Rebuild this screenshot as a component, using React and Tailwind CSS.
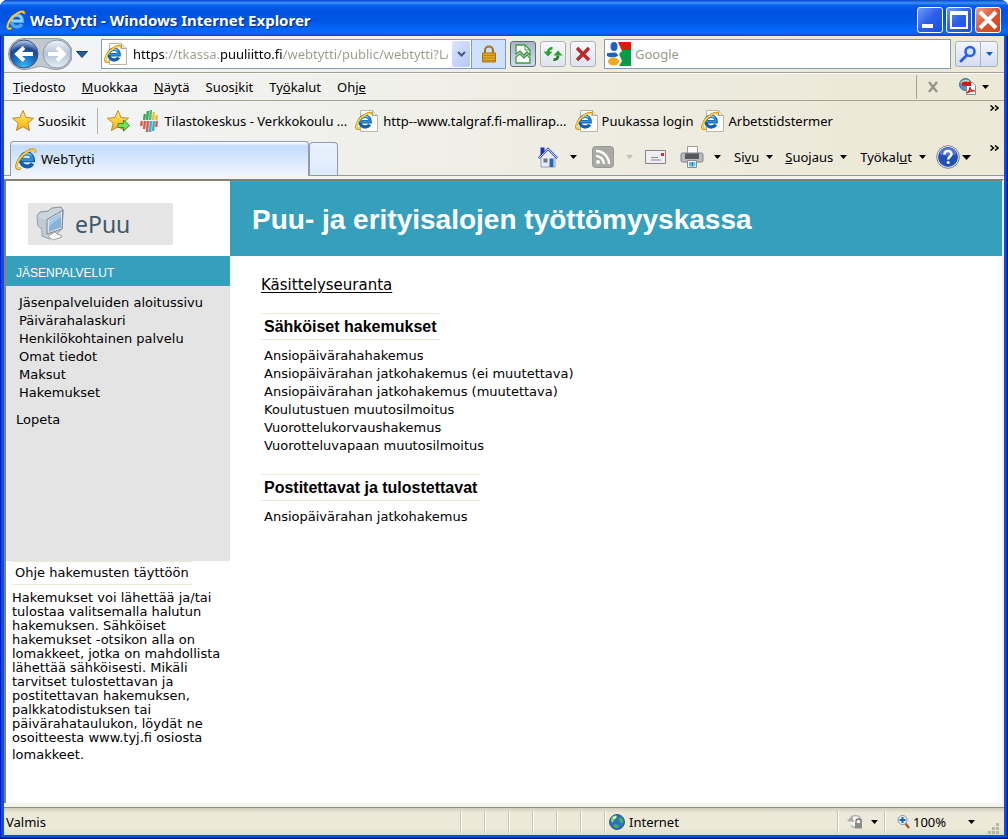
import React, { useState } from 'react';

const MENUS = [
  ['', 'T', 'iedosto'],
  ['', 'M', 'uokkaa'],
  ['', 'N', 'äytä'],
  ['Suos', 'i', 'kit'],
  ['Ty', 'ö', 'kalut'],
  ['Ohj', 'e', ''],
];

const MEMBER_LINKS = [
  'Jäsenpalveluiden aloitussivu',
  'Päivärahalaskuri',
  'Henkilökohtainen palvelu',
  'Omat tiedot',
  'Maksut',
  'Hakemukset',
];

const ELECTRONIC = [
  'Ansiopäivärahahakemus',
  'Ansiopäivärahan jatkohakemus (ei muutettava)',
  'Ansiopäivärahan jatkohakemus (muutettava)',
  'Koulutustuen muutosilmoitus',
  'Vuorottelukorvaushakemus',
  'Vuorotteluvapaan muutosilmoitus',
];

const HELP_LINES = [
  'Hakemukset voi lähettää ja/tai',
  'tulostaa valitsemalla halutun',
  'hakemuksen. Sähköiset',
  'hakemukset -otsikon alla on',
  'lomakkeet, jotka on mahdollista',
  'lähettää sähköisesti. Mikäli',
  'tarvitset tulostettavan ja',
  'postitettavan hakemuksen,',
  'palkkatodistuksen tai',
  'päivärahataulukon, löydät ne',
  'osoitteesta www.tyj.fi osiosta',
];

/* ---------- icons ---------- */

function IeMark({ light }) {
  return (
    <g fill="none">
      <path d="M6.5 12.200H18C18 8 15.500 5.600 12 5.600S5.800 8.300 5.800 12s2.700 6.400 6.200 6.400c2.400 0 4.300-1 5.400-2.900" stroke={light ? '#4da6ee' : '#135fae'} strokeWidth="4" />
      <path d="M6.5 12H17.500C17.500 8 15 6 12 6S6.200 8.500 6.200 12" stroke={light ? '#9ad8fb' : '#2f93dc'} strokeWidth="2" />
      <path d="M7.500 7.500c2-2.500 6-2.800 8.500-.5" stroke="#7fd0f5" strokeWidth="1.500" />
      <path d="M6 20C3.500 21.500 1 21 1.500 17.500 2.200 13 6.500 7 12.500 3.500 17 .800 20.500 1 20.200 4.500" stroke="#c08a14" strokeWidth="2.600" />
      <path d="M6 19.800C3.500 21 1.500 20.500 1.800 17.500 2.500 13 6.700 7.200 12.700 3.700 17 1.200 20 1.500 20 4" stroke="#ffd84a" strokeWidth="1.500" />
    </g>
  );
}

function IeIcon({ className, light }) {
  return (
    <svg viewBox="0 0 22 22" className={className} aria-hidden="true">
      <IeMark light={light} />
    </svg>
  );
}

function IePageIcon() {
  return (
    <svg viewBox="0 0 24 24" className="h-6 w-6 shrink-0" aria-hidden="true">
      <path d="M5.500 1.500h12l5 5v16h-17z" fill="#fdfdfc" stroke="#b9b7ad" />
      <path d="M17.500 1.500v5h5" fill="#e4e4e0" stroke="#aaa89e" />
      <g transform="translate(0 2.500) scale(.84)">
        <IeMark />
      </g>
    </svg>
  );
}

const STAR = 'M12 1.500l3 7 7.500.700-5.700 5 1.800 7.400L12 17.700l-6.600 3.900 1.800-7.400-5.700-5 7.500-.7z';

function StarIcon({ add }) {
  return (
    <svg viewBox="0 0 24 24" className="h-6 w-6 shrink-0" aria-hidden="true">
      <defs>
        <linearGradient id="star" x1="0" y1="0" x2="0" y2="1">
          <stop offset="0" stopColor="#fff0a0" />
          <stop offset=".5" stopColor="#ffd02f" />
          <stop offset="1" stopColor="#f5a623" />
        </linearGradient>
      </defs>
      <path d={STAR} fill="url(#star)" stroke="#bd8a2b" strokeLinejoin="round" />
      {add && <path d="M12 14.500h5.500V11l6 5.500-6 5.500v-3.500H12z" fill="#7ddc5a" stroke="#2f9427" />}
    </svg>
  );
}

// bars lean to the right like the statistics office logo
function StatIcon() {
  const bars = [
    [0, 12, 17, '#e2574c'], [3, 5, 11, '#35a85a'], [3, 12, 20, '#e2574c'],
    [6, 2, 11, '#35a85a'], [6, 12, 23, '#e2574c'], [9, 1, 11, '#4cb96a'],
    [9, 12, 23, '#35b0c6'], [12, 3, 11, '#f4b83a'], [12, 12, 22, '#35b0c6'],
    [15, 6, 11, '#f4b83a'], [15, 12, 18, '#e2574c'],
  ];
  return (
    <svg viewBox="0 0 18 24" className="h-6 w-[18px] shrink-0" aria-hidden="true">
      {bars.map(([x, y1, y2, c]) => (
        <path key={`${x}-${y1}`} d={`M${x + 1.9} ${y1}L${x + 1.1} ${y2}`} stroke={c} strokeWidth="2.400" />
      ))}
    </svg>
  );
}

function NavButtons() {
  return (
    <div className="relative h-8 w-16 shrink-0">
      <svg viewBox="0 0 64 32" className="absolute inset-0 h-8 w-16" aria-hidden="true">
        <defs>
          <radialGradient id="back" cx=".5" cy="1" r=".95">
            <stop offset="0" stopColor="#3fc0fb" />
            <stop offset=".5" stopColor="#1768bd" />
            <stop offset=".75" stopColor="#1c4790" />
            <stop offset="1" stopColor="#a5bfe4" />
          </radialGradient>
          <linearGradient id="fwd" x1="0" y1="0" x2="0" y2="1">
            <stop offset="0" stopColor="#eef2f7" />
            <stop offset=".5" stopColor="#b5c4d5" />
            <stop offset="1" stopColor="#e4f0f8" />
          </linearGradient>
        </defs>
        <path d="M16 .5h33a15.500 15.500 0 0 1 0 31c-8 0-11-3-16.500-3S24 31.500 16 31.500a15.500 15.500 0 0 1 0-31z" fill="#c3c8ce" stroke="#9a9da2" />
        <circle cx="16" cy="16" r="14" fill="url(#back)" stroke="#3a557f" />
        <circle cx="49" cy="16" r="14" fill="url(#fwd)" stroke="#8d99a8" />
        <path d="M25 16H10m6-6.500L9 16l7 6.500" fill="none" stroke="#fff" strokeWidth="3.800" />
        <path d="M40 16h15m-6-6.500l7 6.500-7 6.500" fill="none" stroke="#fff" strokeWidth="3.800" />
      </svg>
      <div className="relative flex h-8">
        <button aria-label="Takaisin" className="flex-1 rounded-full" />
        <button aria-label="Eteenpäin" className="flex-1 rounded-full" />
      </div>
    </div>
  );
}

function Caret({ className = 'text-black' }) {
  return (
    <svg viewBox="0 0 7 4" className={`h-1 w-[7px] shrink-0 ${className}`} aria-hidden="true">
      <path d="M0 0h7L3.500 4z" fill="currentColor" />
    </svg>
  );
}

function LockIcon() {
  return (
    <svg viewBox="0 0 16 18" className="h-[18px] w-4" aria-hidden="true">
      <path d="M4 9V5.500a4 4 0 0 1 8 0V9" fill="none" stroke="#a07818" strokeWidth="2.200" />
      <path d="M1.500 8h13v9h-13z" fill="#dfa827" stroke="#a8740f" />
      <path d="M2 10.500h12M2 13h12M2 15.500h12" stroke="#b98516" />
    </svg>
  );
}

function BrokenPageIcon() {
  return (
    <svg viewBox="0 0 18 22" className="h-[22px] w-[18px]" aria-hidden="true">
      <path d="M2 9V2h9l5 5v5l-3-3-3 3-4-4-4 3z" fill="#fff" stroke="#3f9a3f" strokeWidth="1.300" />
      <path d="M2 14l4-3 4 4 3-3 3 3v5H2z" fill="#fff" stroke="#3f9a3f" strokeWidth="1.300" />
      <path d="M11 2v5h5" fill="none" stroke="#3f9a3f" />
    </svg>
  );
}

function RefreshIcon() {
  return (
    <svg viewBox="0 0 20 18" className="h-[18px] w-5" aria-hidden="true">
      <path d="M9.500 3.500C7 3 5.500 4.500 5.200 7" fill="none" stroke="#2f9e35" strokeWidth="2.600" />
      <path d="M.5 6.500h9L5 11.500z" fill="#2f9e35" />
      <path d="M10.500 14.500c3 .5 4.300-1 4.600-4" fill="none" stroke="#1c7d24" strokeWidth="2.800" />
      <path d="M10.500 10.500h9L15 5.500z" fill="#2f9e35" />
    </svg>
  );
}

function GoogleIcon() {
  return (
    <svg viewBox="0 0 24 24" className="h-6 w-6 shrink-0" aria-hidden="true">
      <path d="M11 0h13v8l-9 1z" fill="#f01010" />
      <path d="M24 8v16H12l3-5-3-7 4-4z" fill="#0b9a45" />
      <ellipse cx="7" cy="4.500" rx="3.500" ry="4.500" fill="#1c62c4" />
      <path d="M0 9c2 2 4 2 7 1.500 2-.3 4 1 4 3.500-3 1.500-8 2-11 0z" fill="#1c62c4" />
      <path d="M0 9h3v2H0z" fill="#fff" />
      <ellipse cx="6.500" cy="19.500" rx="5.500" ry="4" fill="#f7a81a" />
    </svg>
  );
}

function SearchIcon() {
  return (
    <svg viewBox="0 0 18 18" className="h-[18px] w-[18px]" aria-hidden="true">
      <circle cx="11" cy="6.500" r="4.500" fill="#d7e7ff" stroke="#2863e2" strokeWidth="2.600" />
      <path d="M7.500 10.500L2 16" stroke="#2863e2" strokeWidth="3" strokeLinecap="round" />
    </svg>
  );
}

function PdfIcon() {
  return (
    <svg viewBox="0 0 18 18" className="h-[18px] w-[18px]" aria-hidden="true">
      <circle cx="6.500" cy="6.500" r="6" fill="#5b93b8" stroke="#49708a" />
      <path d="M2 5c2-3 5-3 8-2" fill="none" stroke="#b9dcc0" strokeWidth="1.500" />
      <path d="M7.500 4.500h6l3 3v9h-9z" fill="#fff" stroke="#8b8b8b" />
      <path d="M3 4h9v4H3z" fill="#d81717" />
      <path d="M8 15c3-2 3-4 3-6 0 3 2 4 5 4-3-.5-5 0-8 2z" fill="none" stroke="#d81717" strokeWidth="1.200" />
    </svg>
  );
}

function HomeIcon() {
  return (
    <svg viewBox="0 0 20 21" className="h-[21px] w-5" aria-hidden="true">
      <path d="M3 10l7-7 7 7v10H3z" fill="#e9edf8" stroke="#8d9cc0" />
      <path d="M.8 11.200L10 2l9.200 9.200" fill="none" stroke="#4a60b0" strokeWidth="2.400" />
      <path d="M.8 11.200L10 2l9.200 9.200" fill="none" stroke="#c6d2ee" />
      <path d="M2.500.5h4V5l-4 3.500z" fill="#1c2fc0" />
      <path d="M5.500 11.500h4v4h-4z" fill="#77777b" />
      <path d="M11.500 11.500h4V20h-4z" fill="#2c6ab0" />
    </svg>
  );
}

function RssIcon() {
  return (
    <svg viewBox="0 0 22 22" className="h-[22px] w-[22px]" aria-hidden="true">
      <rect x=".5" y=".5" width="21" height="21" rx="3" fill="#a9a9a5" stroke="#989894" />
      <circle cx="6" cy="16" r="2" fill="#fff" />
      <path d="M4 10a8 8 0 0 1 8 8M4 5a13 13 0 0 1 13 13" fill="none" stroke="#fff" strokeWidth="2.400" />
    </svg>
  );
}

function MailIcon() {
  return (
    <svg viewBox="0 0 21 14" className="h-3.5 w-[21px]" aria-hidden="true">
      <path d="M.5.500h20v13H.5z" fill="#efeff2" stroke="#85868c" />
      <path d="M16 3h3v3h-3z" fill="#e12b2b" />
      <path d="M6 7.500h7M6 10h10" stroke="#8d8e96" />
    </svg>
  );
}

function PrinterIcon() {
  return (
    <svg viewBox="0 0 24 22" className="h-[22px] w-6" aria-hidden="true">
      <path d="M7.500.500h10v7h-10z" fill="#fbfbfb" stroke="#9a9a9a" />
      <rect x="1" y="7" width="22" height="9" rx="1.500" fill="#b8babe" stroke="#808286" />
      <path d="M5 7.500h14V13H5z" fill="#55585d" />
      <path d="M7.500 14.500h9v7h-9z" fill="#fff" stroke="#8b8b8b" />
      <path d="M9 16h2.500v4.500H9z" fill="#4cc6e8" />
      <path d="M11.500 16h2v4.500h-2z" fill="#2878c8" />
      <path d="M13.500 16h2v4.500h-2z" fill="#5bd0e0" />
    </svg>
  );
}

function HelpIcon() {
  return (
    <svg viewBox="0 0 24 24" className="h-6 w-6" aria-hidden="true">
      <circle cx="12" cy="12" r="11.300" fill="#eef1f7" stroke="#7d828c" />
      <circle cx="12" cy="12" r="10" fill="#2450b4" />
      <path d="M3 8.500a10 10 0 0 1 18 0c-4 3-14 3-18 0z" fill="#5578cb" />
      <path d="M8.500 9.500c0-4.500 7-4.500 7-.5 0 2.500-3.300 2.500-3.300 5.500" fill="none" stroke="#fff" strokeWidth="2.400" />
      <circle cx="12.200" cy="17.500" r="1.500" fill="#fff" />
    </svg>
  );
}

function ComputerIcon() {
  return (
    <svg viewBox="0 0 30 36" className="h-9 w-[30px]" aria-hidden="true">
      <path d="M1 10l3-4 8-1 4-3 9-1 2 3-1 19-12 10-8-3v-7l-4-3z" fill="#ccd4dd" stroke="#8b929a" />
      <path d="M1.500 10.500l9 4 1 17-5-2v-7l-4-2.500z" fill="#c3cbd5" />
      <path d="M11 13.500L27 4l-1 19-15 5z" fill="#dde3ea" stroke="#7a828c" />
      <path d="M13 14l12-7.500v15L13 26z" fill="#86b3dc" />
      <path d="M13 14l12-7.500V11l-12 9z" fill="#a9cbeb" />
      <path d="M12 30l7-4 2 2 4 1 1 2-9 3-3-2z" fill="#fafafa" stroke="#a2a2a2" />
    </svg>
  );
}

function GlobeIcon() {
  return (
    <svg viewBox="0 0 16 16" className="h-4 w-4" aria-hidden="true">
      <circle cx="8" cy="8" r="7.500" fill="#2d6fc2" stroke="#36598f" />
      <path d="M2 5c2-4 5-4 6-3 0 3-3 3-4 6-1 1-2 0-2-3z" fill="#79dd6a" />
      <path d="M10 4c3-1 5 2 4 5-2 1-4-1-4-5zM4 11c3-2 5 0 6 2-2 2-5 1-6-2z" fill="#43b944" />
      <path d="M4 4l3-1" stroke="#f4fff4" strokeWidth="1.500" />
    </svg>
  );
}

function ProtectIcon() {
  return (
    <svg viewBox="0 0 16 15" className="h-[15px] w-4" aria-hidden="true">
      <path d="M4 3.500a6 6 0 1 1 0 8" fill="#f3f3f0" stroke="#b3b3ae" strokeWidth="1.500" />
      <path d="M0 7l5-5 2 6z" fill="#aaaaa6" />
      <path d="M9 9V7.500a2.500 2.500 0 0 1 5 0V9" fill="none" stroke="#777" strokeWidth="1.300" />
      <path d="M8 9h7v5.500H8z" fill="#8a8a88" />
    </svg>
  );
}

function ZoomIcon() {
  return (
    <svg viewBox="0 0 13 14" className="h-3.5 w-[13px]" aria-hidden="true">
      <path d="M8 8l4 5" stroke="#a5582b" strokeWidth="2.400" />
      <circle cx="5.500" cy="5" r="4.500" fill="#e8f3ff" stroke="#7d93b8" />
      <path d="M5.500 2v6M2.500 5h6" stroke="#1c5fc6" strokeWidth="2" />
    </svg>
  );
}

/* ---------- browser chrome ---------- */

function TitleBar() {
  const box = 'flex h-[26px] w-[26px] items-center justify-center rounded-[3px] border border-white';
  return (
    <header className="flex h-9 shrink-0 items-center rounded-t-[7px] bg-[linear-gradient(to_bottom,#0846c8_0,#3c93fd_3px,#0a62ee_5px,#0053e0_10px,#0055e6_21px,#0468fb_30px,#0566fc_33px,#0148cc_36px)] pr-[7px] pl-[6px]">
      <IeIcon light className="mt-1 h-5 w-5" />
      <h1 className="mt-1 ml-1 flex-1 font-['Noto_Sans'] text-[15px] font-bold text-white [text-shadow:1px_1px_1px_#0a2a86]">
        WebTytti - Windows Internet Explorer
      </h1>
      <div className="mt-[3px] flex gap-[3px]">
        <button aria-label="Pienennä" className={`${box} bg-[linear-gradient(135deg,#6f9cf8,#2b5ee8_50%,#1a4fe0)]`}>
          <span className="mt-3 mr-1.5 h-1 w-[11px] bg-white" />
        </button>
        <button aria-label="Suurenna" className={`${box} bg-[linear-gradient(135deg,#6f9cf8,#2b5ee8_50%,#1a4fe0)]`}>
          <span className="h-[18px] w-[18px] border-2 border-t-4 border-white" />
        </button>
        <button aria-label="Sulje" className={`${box} bg-[linear-gradient(135deg,#f0a084,#dd5430_50%,#d0421a)]`}>
          <svg viewBox="0 0 20 20" className="h-5 w-5" aria-hidden="true">
            <path d="M2 2l16 16M18 2L2 18" stroke="#fff" strokeWidth="4" />
          </svg>
        </button>
      </div>
    </header>
  );
}

function AddressRow() {
  const [url, setUrl] = useState('https://tkassa.puuliitto.fi/webtytti/public/webtytti?LANG=fi');
  const tool = 'flex h-[26px] w-[26px] items-center justify-center rounded-[3px] border border-[#adb2bc] bg-linear-to-b from-[#f6f8fb] to-[#dfe3ec]';
  return (
    <div className="flex h-[37px] shrink-0 items-center border-b border-[#a5a291] pr-1.5 pl-1">
      <NavButtons />
      <button aria-label="Viimeisimmät sivut" className="ml-1 flex w-3 justify-center">
        <svg viewBox="0 0 12 7" className="h-[7px] w-3" aria-hidden="true">
          <path d="M.5.500h11L6 6.500z" fill="#1d5f9f" stroke="#133f73" />
        </svg>
      </button>
      <div className="ml-[13px] flex h-[30px] w-[405px] shrink-0 border border-[#7f9db9] bg-white">
        <div className="flex min-w-0 flex-1 items-center pl-0.5">
          <IePageIcon />
          {/* scheme and domain are emphasised, the rest of the address is dimmed */}
          <input
            aria-label="Osoite"
            value={url}
            onChange={(e) => setUrl(e.target.value)}
            className="mr-1 ml-[5px] min-w-0 flex-1 bg-[linear-gradient(to_right,#000_0_32px,#9c9a8c_32px_88px,#000_88px_150px,#9c9a8c_150px)] bg-clip-text text-transparent caret-black outline-none"
          />
          <button aria-label="Näytä osoitteet" className="flex h-[26px] w-[18px] items-center justify-center rounded-[2px] bg-linear-to-br from-[#dbe5fd] to-[#b4c8f6]">
            <svg viewBox="0 0 9 6" className="h-1.5 w-[9px]" aria-hidden="true">
              <path d="M1 1l3.500 3.500L8 1" fill="none" stroke="#44587c" strokeWidth="2" />
            </svg>
          </button>
        </div>
        <button aria-label="Suojausraportti" className="ml-px flex w-[34px] items-center justify-center border-l border-[#7f9db9] bg-[#cfe0fd]">
          <LockIcon />
        </button>
      </div>
      <div className="ml-1 flex gap-1">
        <button aria-label="Yhteensopivuusnäkymä" className="flex h-[26px] w-[26px] items-center justify-center rounded-[3px] border border-[#5c6b80] bg-linear-to-b from-[#a9b6c8] to-[#d3deeb]">
          <BrokenPageIcon />
        </button>
        <button aria-label="Päivitä" className={tool}><RefreshIcon /></button>
        <button aria-label="Pysäytä" className={tool}>
          <svg viewBox="0 0 16 16" className="h-4 w-4" aria-hidden="true">
            <path d="M2 2l12 12M14 2L2 14" stroke="#b9282c" strokeWidth="3.400" />
          </svg>
        </button>
      </div>
      <div className="ml-2 flex h-[30px] min-w-0 flex-1 items-center border border-[#7f9db9] bg-white pl-0.5">
        <GoogleIcon />
        <input aria-label="Haku" placeholder="Google" className="ml-1 min-w-0 flex-1 outline-none placeholder:text-[#9c9a8c]" />
      </div>
      <div className="ml-1 flex h-[26px] rounded-[3px] border border-[#adb2bc] bg-linear-to-b from-[#f3f6fc] to-[#d5dcf0]">
        <button aria-label="Hae" className="flex w-[25px] items-center justify-center border-r border-[#adb2bc]"><SearchIcon /></button>
        <button aria-label="Hakuasetukset" className="flex w-4 items-center justify-center"><Caret className="text-[#1556d6]" /></button>
      </div>
    </div>
  );
}

function MenuRow() {
  return (
    <div className="flex h-7 shrink-0 items-center border-b border-[#a5a291] border-t border-t-white pr-[15px] pl-[9px]">
      <nav className="flex flex-1 gap-4">
        {MENUS.map(([before, key, after]) => (
          <button key={before + key}>
            {before}<u>{key}</u>{after}
          </button>
        ))}
      </nav>
      <div className="flex h-6 items-center border-l border-[#a5a291]">
        <button aria-label="Sulje työkalurivi" className="ml-2.5">
          <svg viewBox="0 0 12 12" className="h-3 w-3" aria-hidden="true">
            <path d="M2 1l8 10M10 1L2 11" stroke="#98968c" strokeWidth="2.400" />
          </svg>
        </button>
        <button aria-label="PDF" className="ml-5 flex items-center gap-[5px]">
          <PdfIcon />
          <Caret />
        </button>
      </div>
    </div>
  );
}

function More() {
  return (
    <button aria-label="Lisää" className="mt-1 self-start">
      <svg viewBox="0 0 9 6" className="h-1.5 w-[9px]" aria-hidden="true">
        <path d="M.5.500L3.500 3 .5 5.500M5 .500L8 3 5 5.500" fill="none" stroke="#000" strokeWidth="1.500" />
      </svg>
    </button>
  );
}

function FavoritesRow() {
  return (
    <div className="flex h-10 shrink-0 items-center pr-[5px] pl-[7px]">
      <button className="flex items-center gap-[3px]"><StarIcon />Suosikit</button>
      <span className="mr-2 ml-[11px] h-[26px] w-px bg-[#b5b3a6]" />
      <button aria-label="Lisää suosikkeihin"><StarIcon add /></button>
      <nav className="ml-2.5 flex flex-1 items-center gap-2">
        <a href="#tilastokeskus" className="flex items-center gap-[7px]"><StatIcon />Tilastokeskus - Verkkokoulu ...</a>
        <a href="#talgraf" className="flex items-center gap-1"><IePageIcon />http--www.talgraf.fi-mallirap...</a>
        <a href="#puukassa" className="flex items-center gap-[3px]"><IePageIcon />Puukassa login</a>
        <a href="#arbetstid" className="flex items-center gap-[3px]"><IePageIcon />Arbetstidstermer</a>
      </nav>
      <More />
    </div>
  );
}

function TabRow() {
  return (
    <div className="flex h-[35px] shrink-0 items-end border-b border-[#919b9c] pr-[5px] pl-1.5">
      <button className="-mb-px flex h-[35px] w-[299px] shrink-0 items-center gap-1 rounded-t-[4px] border border-b-0 border-[#9499ad] bg-[linear-gradient(to_bottom,#fff_0,#c4dbfc_4px,#f1f6fd)] pl-1">
        <IeIcon className="h-[22px] w-[22px]" />
        WebTytti
      </button>
      <button aria-label="Uusi välilehti" className="h-[33px] w-[29px] shrink-0 rounded-t-[4px] border border-b-0 border-[#9499ad] bg-linear-to-b from-[#e9f2fd] to-[#dcebfb]" />
      <div className="mb-1.5 ml-auto flex items-center">
        <button aria-label="Aloitussivu" className="flex items-center gap-3"><HomeIcon /><Caret /></button>
        <button aria-label="Syötteet" className="ml-[15px] flex items-center gap-3"><RssIcon /><Caret className="text-[#c3c1b4]" /></button>
        <button aria-label="Sähköposti" className="ml-3"><MailIcon /></button>
        <button aria-label="Tulosta" className="ml-3.5 flex items-center gap-2.5"><PrinterIcon /><Caret /></button>
        <button className="ml-[13px] flex items-center gap-[7px]"><span>Si<u>v</u>u</span><Caret /></button>
        <button className="ml-3 flex items-center gap-[7px]"><span><u>S</u>uojaus</span><Caret /></button>
        <button className="ml-[13px] flex items-center gap-[7px]"><span>Työkal<u>u</u>t</span><Caret /></button>
        <button aria-label="Ohje" className="ml-2.5 flex items-center gap-0.5">
          <HelpIcon />
          <svg viewBox="0 0 9 5" className="h-[5px] w-[9px]" aria-hidden="true">
            <path d="M0 0h9L4.500 5z" />
          </svg>
        </button>
      </div>
      <div className="ml-[19px] flex h-[34px] items-start"><More /></div>
    </div>
  );
}

function StatusBar() {
  return (
    <footer className="flex h-7 shrink-0 items-center border-t border-[#8f8d80] bg-[linear-gradient(to_bottom,#cfccbd_0,#ece9d8_5px,#ece9d8_20px,#dedbcb)] pl-0.5">
      <span className="flex-1">Valmis</span>
      <div className="flex h-[22px]">
        {[0, 1, 2, 3, 4, 5].map((n) => (
          <span key={n} className="w-6 border-l border-[#c5c2b2] shadow-[inset_1px_0_#fff]" />
        ))}
      </div>
      <div className="flex h-[22px] w-[233px] items-center gap-1 border-l border-[#c5c2b2] pl-1 shadow-[inset_1px_0_#fff]">
        <GlobeIcon />
        Internet
      </div>
      <button aria-label="Suojattu tila" className="flex h-[22px] w-[47px] items-center gap-2 border-l border-[#c5c2b2] pl-[9px] shadow-[inset_1px_0_#fff]">
        <ProtectIcon />
        <Caret />
      </button>
      <button className="flex h-[22px] w-[91px] items-center border-l border-[#c5c2b2] pl-3 shadow-[inset_1px_0_#fff]">
        <ZoomIcon />
        <span className="ml-[3px] flex-1 text-left">100%</span>
        <Caret />
      </button>
      <svg viewBox="0 0 12 12" className="mr-1 ml-[13px] h-3 w-3 self-end" aria-hidden="true">
        <path d="M8 0h3v3H8zM4 4h3v3H4zM8 4h3v3H8zM0 8h3v3H0zM4 8h3v3H4zM8 8h3v3H8z" fill="#b8b5a4" />
      </svg>
    </footer>
  );
}

/* ---------- web page ---------- */

function FormSection({ title, items }) {
  return (
    <section className="mb-[19px]">
      <h3 className="w-fit border-y border-[#ece9d8] px-[3px] font-['Liberation_Sans'] text-[16px] leading-[25px] font-bold">
        {title}
      </h3>
      <ul className="mt-[7px] pl-[3px]">
        {items.map((item) => (
          <li key={item}><a href="#hakemus">{item}</a></li>
        ))}
      </ul>
    </section>
  );
}

function Sidebar() {
  return (
    <aside className="w-[224px] shrink-0">
      <div className="flex h-[75px] items-center pt-2.5 pl-[22px]">
        <a href="#epuu" className="flex h-[42px] w-[145px] items-center gap-[9px] bg-[#e6e6e6] pl-2 font-['Noto_Sans'] text-[23px] text-[#3e586c]">
          <ComputerIcon />
          ePuu
        </a>
      </div>
      <nav className="h-[305px] bg-[#e4e4e4]">
        <h2 className="h-[30px] bg-[#369fbc] pt-1 pl-2.5 font-['Liberation_Sans'] text-[12px] leading-[27px] text-white">
          JÄSENPALVELUT
        </h2>
        <ul className="pt-2 pl-[13px]">
          {MEMBER_LINKS.map((item) => (
            <li key={item}><a href="#palvelu">{item}</a></li>
          ))}
        </ul>
        <a href="#lopeta" className="mt-[9px] ml-2.5 block">Lopeta</a>
      </nav>
      <div className="pl-1.5">
        <h3 className="w-fit border-y border-[#ece9d8] px-[3px] leading-[22px]">Ohje hakemusten täyttöön</h3>
        <p className="mt-1.5 leading-[14px] whitespace-nowrap">
          {HELP_LINES.map((line) => (
            <span key={line} className="block">{line}</span>
          ))}
        </p>
        <p className="leading-5">lomakkeet.</p>
      </div>
    </aside>
  );
}

function Page() {
  return (
    <div className="flex flex-1 border-t-2 border-r-2 border-l-2 border-t-[#85816f] border-r-[#f1efe2] border-l-[#85816f] bg-white font-['DejaVu_Sans',sans-serif] text-[13px] leading-[18px] text-black">
      <Sidebar />
      <main className="min-w-0 flex-1">
        <h1 className="flex h-[75px] items-center bg-[#369fbc] pt-0.5 pl-[22px] font-['Liberation_Sans'] text-[28px] font-bold text-white">
          Puu- ja erityisalojen työttömyyskassa
        </h1>
        <div className="pt-5 pl-[31px]">
          <a href="#seuranta" className="mb-[19px] block w-fit text-[15px] underline underline-offset-2">Käsittelyseuranta</a>
          <FormSection title="Sähköiset hakemukset" items={ELECTRONIC} />
          <FormSection title="Postitettavat ja tulostettavat" items={['Ansiopäivärahan jatkohakemus']} />
        </div>
      </main>
    </div>
  );
}

export default function App() {
  return (
    <div className="flex min-h-screen flex-col rounded-t-[8px] bg-[#0a50e0] font-['Noto_Sans',sans-serif] text-[13px] leading-[18px] text-black shadow-[inset_-1px_-1px_#00138c,inset_1px_0_#0019cf,inset_-2px_-2px_#0831d9]">
      <TitleBar />
      <div className="mx-1 mb-1 flex flex-1 flex-col bg-[linear-gradient(to_right,#f3f5f8,#ece9d8_85%)]">
        <AddressRow />
        <MenuRow />
        <FavoritesRow />
        <TabRow />
        <div className="h-[3px] shrink-0 bg-[#f1f5fb]" />
        <Page />
        <div className="h-1 shrink-0 bg-[#f4f3ea]" />
        <StatusBar />
      </div>
    </div>
  );
}
